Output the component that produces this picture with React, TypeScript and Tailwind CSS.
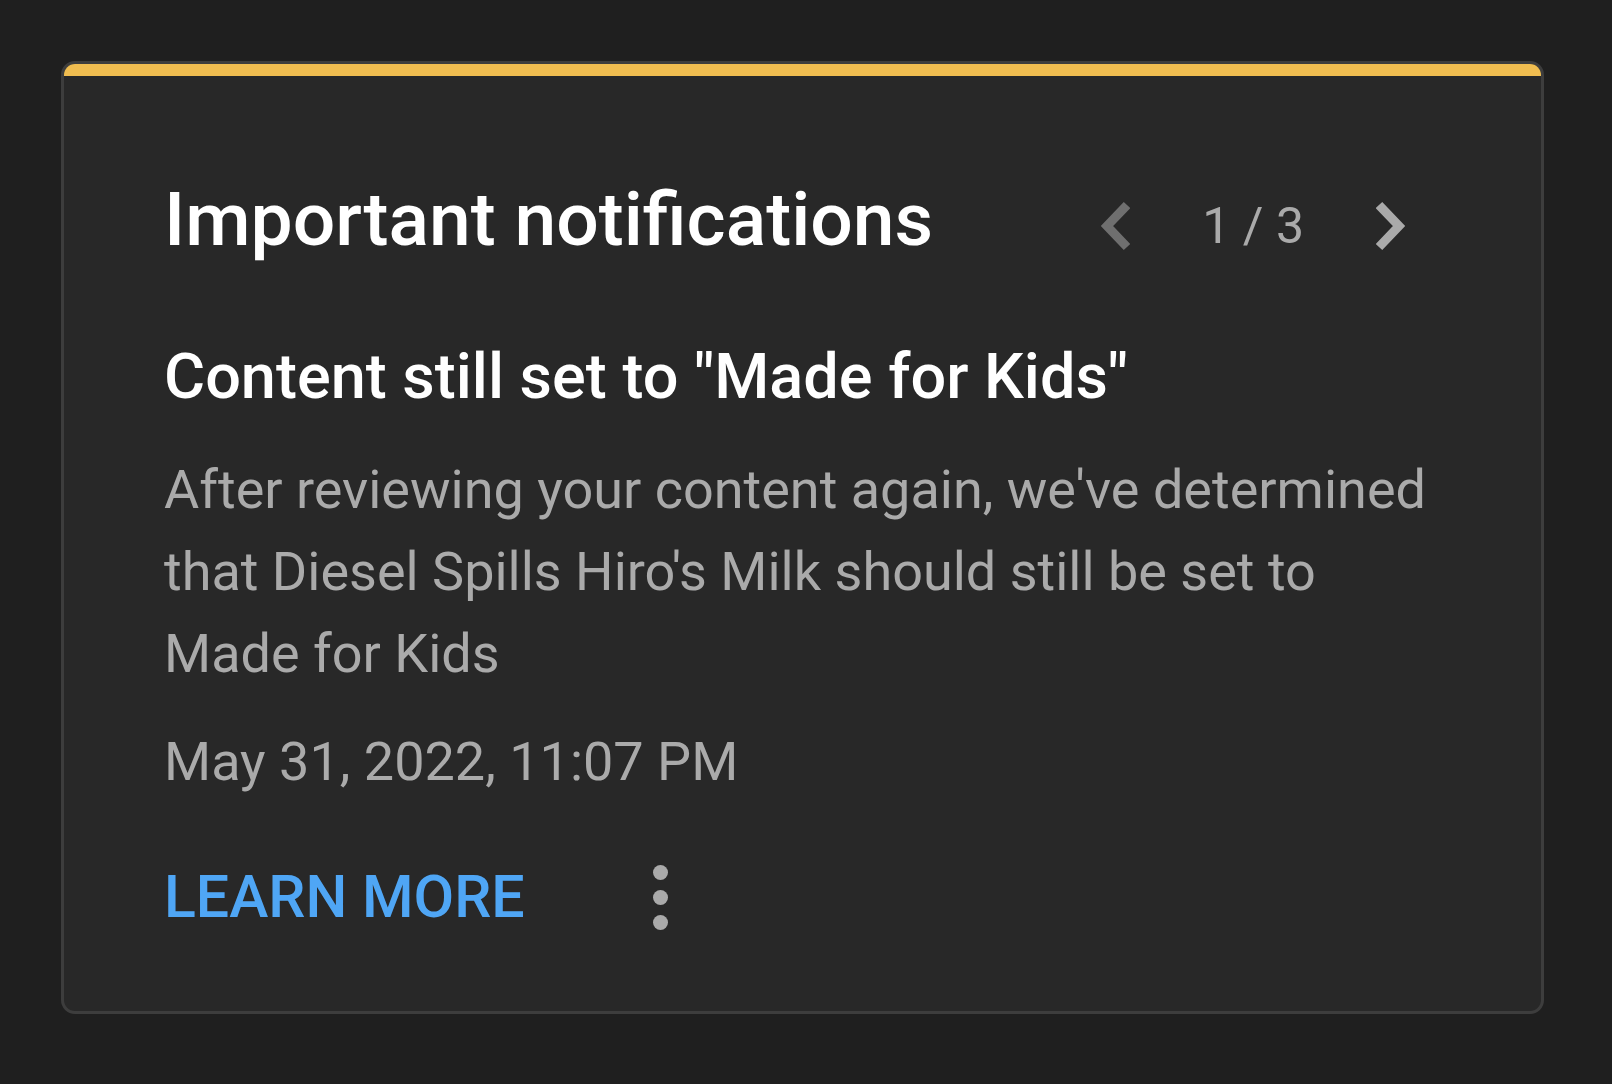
import React from "react";

function Chevron({ dir, color }: { dir: "left" | "right"; color: string }) {
  const pts = dir === "left" ? "29,4 9,25 29,46" : "3,4 23,25 3,46";
  return (
    <svg width="32" height="50" viewBox="0 0 32 50" fill="none">
      <polyline points={pts} stroke={color} strokeWidth="9" strokeLinecap="butt" strokeLinejoin="miter" />
    </svg>
  );
}

export default function App() {
  return (
    <div
      className="w-[1612px] h-[1084px] bg-[#1f1f1f] pt-[61px] pl-[61px]"
      style={{ fontFamily: "Roboto, 'Liberation Sans', sans-serif" }}
    >
      <div className="w-[1483px] h-[953px] rounded-[14px] border-[3px] border-[#3d3d3d] bg-[#282828] overflow-hidden">
        <div className="h-[12px] bg-[#f0bd50]" />
        <div className="pl-[100px] pt-[103px]">
          <div className="flex items-center pr-[133px]">
            <h1 className="text-[75px] leading-[80px] font-medium text-white">Important notifications</h1>
            <div className="ml-auto flex items-center gap-[72px] pt-[14px]">
              <Chevron dir="left" color="#6f6f6f" />
              <span className="text-[50px] leading-[60px] text-[#aaaaaa]">1 / 3</span>
              <Chevron dir="right" color="#aaaaaa" />
            </div>
          </div>
          <h2 className="mt-[82px] text-[63px] leading-[72px] font-medium text-white">
            Content still set to "Made for Kids"
          </h2>
          <p className="mt-[36px] w-[1290px] text-[54px] leading-[82px] text-[#aaaaaa]">
            After reviewing your content again, we've determined that Diesel Spills Hiro's Milk should still be set to Made for Kids
          </p>
          <p className="mt-[26px] text-[54px] leading-[82px] text-[#aaaaaa]">May 31, 2022, 11:07 PM</p>
          <div className="mt-[58px] flex items-center gap-[128px]">
            <span className="text-[59px] leading-[72px] font-medium text-[#4fa6f5]">LEARN MORE</span>
            <div className="flex flex-col gap-[10px]">
              <div className="w-[15px] h-[15px] rounded-full bg-[#aaaaaa]" />
              <div className="w-[15px] h-[15px] rounded-full bg-[#aaaaaa]" />
              <div className="w-[15px] h-[15px] rounded-full bg-[#aaaaaa]" />
            </div>
          </div>
        </div>
      </div>
    </div>
  );
}
